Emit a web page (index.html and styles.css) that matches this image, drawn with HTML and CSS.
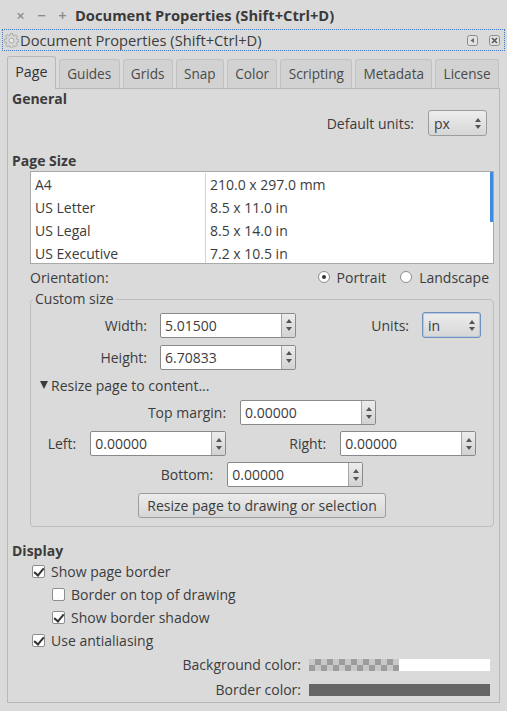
FILE: index.html
```html
<!DOCTYPE html>
<html lang="en">
<head>
  <meta charset="UTF-8">
  <title>Document Properties (Shift+Ctrl+D)</title>
  <link rel="stylesheet" href="styles.css">
</head>
<body>
  <div class="window">
    <!-- Barra de título -->
    <div class="titlebar">
      <span class="wbtn">×</span>
      <span class="wbtn">−</span>
      <span class="wbtn">+</span>
      <span class="title">Document Properties (Shift+Ctrl+D)</span>
    </div>

    <!-- Cabecera del panel acoplable -->
    <div class="dockbar">
      <svg class="gear" width="15" height="15" viewBox="0 0 16 16">
        <path d="M6.8 0.5h2.4l0.4 2.1 1.3 0.6 1.8-1.2 1.7 1.7-1.2 1.8 0.6 1.3 2.1 0.4v2.4l-2.1 0.4-0.6 1.3 1.2 1.8-1.7 1.7-1.8-1.2-1.3 0.6-0.4 2.1H6.8l-0.4-2.1-1.3-0.6-1.8 1.2-1.7-1.7 1.2-1.8-0.6-1.3-2.1-0.4V6.8l2.1-0.4 0.6-1.3-1.2-1.8 1.7-1.7 1.8 1.2 1.3-0.6z" fill="#d6d6d6" stroke="#9a9a9a" stroke-width="0.8"/>
        <circle cx="8" cy="8" r="2.6" fill="#e8e8e8" stroke="#9a9a9a" stroke-width="0.8"/>
      </svg>
      <span class="dock-title">Document Properties (Shift+Ctrl+D)</span>
      <span class="dock-icons">
        <svg width="11" height="11" viewBox="0 0 11 11">
          <rect x="0.5" y="0.5" width="10" height="10" rx="2" fill="#e2e2e2" stroke="#8c8c8c"/>
          <path d="M7 3v5L3.5 5.5z" fill="#6a6a6a"/>
        </svg>
        <svg width="11" height="11" viewBox="0 0 11 11">
          <rect x="0.5" y="0.5" width="10" height="10" rx="2" fill="#e2e2e2" stroke="#8c8c8c"/>
          <path d="M3 3l5 5M8 3l-5 5" stroke="#5a5a5a" stroke-width="1.6"/>
        </svg>
      </span>
    </div>

    <div class="notebook">
      <div class="tabs">
        <div class="tab active">Page</div>
        <div class="tab">Guides</div>
        <div class="tab">Grids</div>
        <div class="tab">Snap</div>
        <div class="tab">Color</div>
        <div class="tab">Scripting</div>
        <div class="tab">Metadata</div>
        <div class="tab">License</div>
      </div>

      <div class="panel">
        <!-- General -->
        <div class="heading">General</div>
        <div class="units-row">
          <span>Default units:</span>
          <div class="combo">
            <span>px</span>
            <span class="arrows"><i class="up"></i><i class="down"></i></span>
          </div>
        </div>

        <!-- Tamaño de página -->
        <div class="heading page-size">Page Size</div>
        <div class="sizes">
          <div class="size-row"><span class="name">A4</span><span>210.0 x 297.0 mm</span></div>
          <div class="size-row"><span class="name">US Letter</span><span>8.5 x 11.0 in</span></div>
          <div class="size-row"><span class="name">US Legal</span><span>8.5 x 14.0 in</span></div>
          <div class="size-row"><span class="name">US Executive</span><span>7.2 x 10.5 in</span></div>
          <div class="scroll-ind"></div>
        </div>

        <div class="orientation">
          <span>Orientation:</span>
          <span class="radios">
            <span class="radio-item"><span class="radio on"></span>Portrait</span>
            <span class="radio-item"><span class="radio"></span>Landscape</span>
          </span>
        </div>

        <fieldset class="custom">
          <legend>Custom size</legend>
          <div class="dim-row">
            <span class="dim-label">Width:</span>
            <div class="spin"><span class="val">5.01500</span><span class="arrows"><i class="up"></i><i class="down"></i></span></div>
            <span class="units-label">Units:</span>
            <div class="combo focus">
              <span>in</span>
              <span class="arrows"><i class="up"></i><i class="down"></i></span>
            </div>
          </div>
          <div class="dim-row">
            <span class="dim-label">Height:</span>
            <div class="spin"><span class="val">6.70833</span><span class="arrows"><i class="up"></i><i class="down"></i></span></div>
          </div>

          <div class="expander"><span class="tri"></span>Resize page to content...</div>

          <div class="margin-row top">
            <span>Top margin:</span>
            <div class="spin"><span class="val">0.00000</span><span class="arrows"><i class="up"></i><i class="down"></i></span></div>
          </div>
          <div class="margin-row sides">
            <span>Left:</span>
            <div class="spin"><span class="val">0.00000</span><span class="arrows"><i class="up"></i><i class="down"></i></span></div>
            <span class="right-label">Right:</span>
            <div class="spin"><span class="val">0.00000</span><span class="arrows"><i class="up"></i><i class="down"></i></span></div>
          </div>
          <div class="margin-row bottom">
            <span>Bottom:</span>
            <div class="spin"><span class="val">0.00000</span><span class="arrows"><i class="up"></i><i class="down"></i></span></div>
          </div>
          <div class="btn-row">
            <div class="button">Resize page to drawing or selection</div>
          </div>
        </fieldset>

        <!-- Visualización -->
        <div class="heading display">Display</div>
        <div class="check-row"><span class="check on"></span>Show page border</div>
        <div class="check-row sub"><span class="check"></span>Border on top of drawing</div>
        <div class="check-row sub"><span class="check on"></span>Show border shadow</div>
        <div class="check-row"><span class="check on"></span>Use antialiasing</div>

        <div class="color-row">
          <span>Background color:</span>
          <span class="swatch bg"></span>
        </div>
        <div class="color-row">
          <span>Border color:</span>
          <span class="swatch border"></span>
        </div>
      </div>
    </div>
  </div>
</body>
</html>
```

FILE: styles.css
```css
/* Estilo general */
body {
  margin: 0;
  background: #dadada;
  font-family: "Open Sans", "DejaVu Sans", sans-serif;
  font-size: 14px;
  color: #3c3c3c;
}

.window {
  width: 507px;
  height: 711px;
  overflow: hidden;
}

/* Barra de título */
.titlebar {
  height: 29px;
  display: flex;
  align-items: center;
  padding-left: 10px;
  box-sizing: border-box;
}

.wbtn {
  width: 21px;
  text-align: center;
  font-size: 15px;
  color: #8a8a8a;
  font-weight: 600;
}

.title {
  margin-left: 2px;
  font-weight: 700;
  font-size: 14.7px;
  color: #3a3a3a;
}

/* Cabecera acoplable */
.dockbar {
  height: 22px;
  margin: 0 2px;
  border: 1px dotted #3f74c0;
  display: flex;
  align-items: center;
  box-sizing: border-box;
}

.gear {
  margin: 0 1px 0 1px;
}

.dock-title {
  font-size: 14.7px;
  flex: 1;
}

.dock-icons {
  display: flex;
  gap: 11px;
  margin-right: 4px;
}

/* Pestañas */
.notebook {
  margin: 5px 7px 0 7px;
}

.tabs {
  display: flex;
  align-items: flex-end;
  gap: 3px;
  height: 32px;
  width: 492px;
}

.tab {
  flex-grow: 1;
  text-align: center;
  height: 29px;
  line-height: 28px;
  padding: 0 5px;
  background: #d2d2d2;
  border: 1px solid #c2c2c2;
  border-bottom: none;
  border-radius: 3px 3px 0 0;
  box-sizing: border-box;
  color: #4a4a4a;
  font-size: 13.6px;
}

.tab.active {
  height: 33px;
  line-height: 30px;
  background: #dadada;
  border-color: #b8b8b8;
  margin-bottom: -1px;
  position: relative;
  color: #333;
  font-size: 14.3px;
}

/* Panel principal */
.panel {
  border: 1px solid #b8b8b8;
  height: 615px;
  box-sizing: border-box;
  padding: 1px 5px 0 4px;
}

.heading {
  font-weight: 700;
  line-height: 18px;
  height: 18px;
}

.units-row {
  display: flex;
  justify-content: flex-end;
  align-items: center;
  gap: 14px;
  margin-top: 2px;
  margin-right: 7px;
}

/* Combo */
.combo {
  width: 59px;
  height: 26px;
  box-sizing: border-box;
  border: 1px solid #9c9c9c;
  border-radius: 3px;
  background: linear-gradient(#ededed, #d6d6d6);
  display: flex;
  align-items: center;
  justify-content: space-between;
  padding: 0 5px 0 5px;
  font-size: 14px;
}

.combo.focus {
  border-color: #6f8fbf;
  box-shadow: inset 0 0 0 1px #b6c7e0;
}

.arrows {
  display: flex;
  flex-direction: column;
  gap: 3px;
}

.arrows i {
  display: block;
  width: 0;
  height: 0;
  border-left: 3px solid transparent;
  border-right: 3px solid transparent;
}

.arrows .up {
  border-bottom: 4px solid #555;
}

.arrows .down {
  border-top: 4px solid #555;
}

.page-size {
  margin-top: 16px;
}

/* Lista de tamaños */
.sizes {
  margin: 1px 0 0 18px;
  height: 93px;
  box-sizing: border-box;
  border: 1px solid #a9a9a9;
  background: #fff;
  position: relative;
  overflow: hidden;
  padding-top: 1px;
}

.size-row {
  display: flex;
  height: 23px;
  line-height: 23px;
}

.size-row span {
  padding-left: 4px;
}

.size-row .name {
  width: 170px;
  border-right: 1px solid #d4d4d4;
}

.scroll-ind {
  position: absolute;
  right: 0;
  top: 0;
  width: 3px;
  height: 50px;
  background: #3d8ae0;
}

/* Orientación */
.orientation {
  display: flex;
  justify-content: space-between;
  align-items: center;
  margin: 4px 5px 0 18px;
  height: 18px;
}

.radios {
  display: flex;
  gap: 14px;
}

.radio-item {
  display: flex;
  align-items: center;
  gap: 7px;
}

.radio {
  width: 12px;
  height: 12px;
  border: 1px solid #8e8e8e;
  border-radius: 50%;
  background: #fff;
  box-sizing: border-box;
  position: relative;
}

.radio.on::after {
  content: "";
  position: absolute;
  left: 3px;
  top: 3px;
  width: 4px;
  height: 4px;
  border-radius: 50%;
  background: #333;
}

/* Tamaño personalizado */
.custom {
  margin: 5px 0 0 18px;
  border: 1px solid #bdbdbd;
  border-radius: 4px;
  padding: 5px 0 9px 0;
  height: 236px;
  box-sizing: border-box;
}

.custom legend {
  padding: 0 2px;
  margin-left: 2px;
  line-height: 16px;
}

.dim-row {
  display: flex;
  align-items: center;
  height: 26px;
  margin-bottom: 6px;
}

.dim-label {
  width: 116px;
  text-align: right;
  margin-right: 13px;
}

.units-label {
  margin-left: auto;
  margin-right: 13px;
}

.dim-row .combo {
  margin-right: 12px;
}

/* Campo numérico */
.spin {
  width: 136px;
  height: 25px;
  box-sizing: border-box;
  border: 1px solid #8a8a8a;
  border-radius: 2px;
  background: #fff;
  display: flex;
}

.spin .val {
  flex: 1;
  line-height: 23px;
  padding-left: 4px;
}

.spin .arrows {
  width: 13px;
  border-left: 1px solid #a6a6a6;
  background: linear-gradient(#ececec, #d2d2d2);
  justify-content: center;
  align-items: center;
  gap: 4px;
}

.expander {
  display: flex;
  align-items: center;
  height: 18px;
  margin: 0 0 6px 9px;
}

.tri {
  width: 0;
  height: 0;
  border-left: 4.5px solid transparent;
  border-right: 4.5px solid transparent;
  border-top: 8px solid #3c3c3c;
  margin-right: 3px;
}

.margin-row {
  display: flex;
  justify-content: center;
  align-items: center;
  gap: 14px;
  height: 25px;
  margin-bottom: 6px;
}

.margin-row .right-label {
  margin-left: 49px;
}

.btn-row {
  display: flex;
  justify-content: center;
}

.button {
  height: 25px;
  line-height: 23px;
  box-sizing: border-box;
  padding: 0 8px;
  border: 1px solid #9c9c9c;
  border-radius: 3px;
  background: linear-gradient(#ececec, #d6d6d6);
}

/* Visualización */
.display {
  margin-top: 15px;
}

.check-row {
  display: flex;
  align-items: center;
  height: 23px;
  padding-left: 20px;
  gap: 6px;
}

.check-row.sub {
  padding-left: 40px;
}

.check {
  width: 13px;
  height: 13px;
  border: 1px solid #8e8e8e;
  border-radius: 2px;
  background: #fff;
  box-sizing: border-box;
  position: relative;
}

.check.on::after {
  content: "";
  position: absolute;
  left: 3px;
  top: 0px;
  width: 4px;
  height: 8px;
  border-right: 2px solid #333;
  border-bottom: 2px solid #333;
  transform: rotate(40deg);
}

.color-row {
  display: flex;
  justify-content: flex-end;
  align-items: center;
  gap: 8px;
  height: 25px;
  padding-right: 4px;
}

.swatch {
  width: 181px;
  height: 12px;
}

.swatch.bg {
  background:
    linear-gradient(90deg, transparent 90px, #fff 90px),
    repeating-conic-gradient(#9c9c9c 0 25%, #c8c8c8 0 50%) 0 0 / 12px 12px;
}

.swatch.border {
  background: #666;
}
```
